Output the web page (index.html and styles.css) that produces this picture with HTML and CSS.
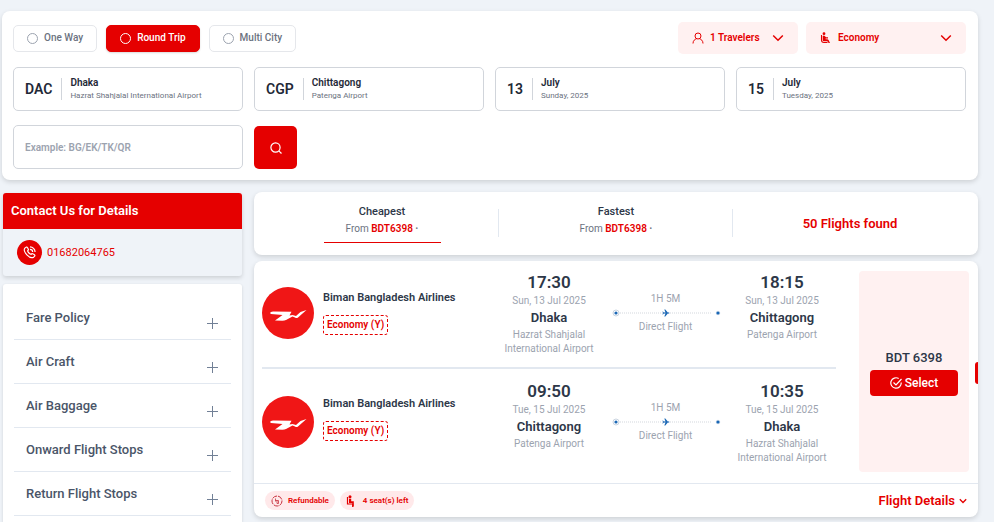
FILE: index.html
```html
<!DOCTYPE html>
<html lang="en">
<head>
<meta charset="utf-8">
<title>Flight search results</title>
<link rel="stylesheet" href="styles.css">
</head>
<body>
<svg class="defs" aria-hidden="true">
  <symbol id="logo" viewBox="0 0 52 52">
    <circle cx="26" cy="26" r="26" fill="#f01616"/>
    <path d="M8 26Q8.500 24.500 11 24.500L29.500 24.800L27.500 28.500L30.500 28L34 29L38.500 25L44.500 23L36 30.500Q34.500 31.500 33 30.500L30.500 29.500L24 33Q22.500 33.800 20.500 33.800L13 33.500L20.500 28L9 27Z" fill="#fff"/>
  </symbol>
  <symbol id="route" viewBox="0 0 110 12">
    <path d="M9 6H101" stroke="#d3d7dd" stroke-dasharray="1 1"/>
    <circle cx="5" cy="6" r="3" fill="#fff" stroke="#cbd5e1"/>
    <circle cx="5" cy="6" r="1.600" fill="#1a67b5"/>
    <circle cx="107" cy="6" r="2.300" fill="#dbe4ee"/>
    <circle cx="107" cy="6" r="1.600" fill="#1a67b5"/>
    <path d="M51.500 4L52.800 5.400H54.500L53.300 2.500H54.300L56.800 5.400H58Q59 6 58 6.600H56.800L54.300 9.500H53.300L54.500 6.600H52.800L51.500 8L52 6Z" fill="#1a67b5"/>
  </symbol>
  <symbol id="chevron" viewBox="0 0 12 12">
    <path d="M1.200 3.500L6 8.300L10.800 3.500" fill="none" stroke="currentColor"/>
  </symbol>
  <symbol id="plus" viewBox="0 0 12 12">
    <path d="M5.500 0V11M0 5.500H11" stroke="#718096"/>
  </symbol>
  <symbol id="seat" viewBox="0 0 12 12">
    <circle cx="4" cy="1.700" r="1.400" fill="currentColor"/>
    <path d="M1.500 3V8Q1.500 10.500 4 10.500H7.500" fill="none" stroke="currentColor" stroke-width="1.100"/>
    <path d="M2.700 4Q4 3 5 4.200L6 5.300H8V6.500H5.600V7.300H7Q8.300 7.300 8.700 8.300L10 11H8.700L7.300 9.300H4Q2.700 9.300 2.700 8Z" fill="currentColor"/>
  </symbol>
</svg>

<form class="card search">
  <div class="options">
    <div class="trip-types">
      <label class="trip"><input type="radio" name="trip">One Way</label>
      <label class="trip trip-active"><input type="radio" name="trip" checked>Round Trip</label>
      <label class="trip"><input type="radio" name="trip">Multi City</label>
    </div>
    <div class="pickers">
      <button type="button" class="picker">
        <svg class="icon" viewBox="0 0 12 12" fill="none" stroke="currentColor"><circle cx="6" cy="4" r="3"/><path d="M1 11.500C1 8.500 3 7.200 4.500 6.800M11 11.500C11 8.500 9 7.200 7.500 6.800"/></svg>
        1 Travelers
        <svg class="icon chev"><use href="#chevron"/></svg>
      </button>
      <div class="cabin">
        <svg class="icon"><use href="#seat"/></svg>
        <select aria-label="Cabin class"><option>Economy</option><option>Business</option></select>
        <svg class="icon chev"><use href="#chevron"/></svg>
      </div>
    </div>
  </div>
  <div class="fields">
    <button type="button" class="field"><span class="code">DAC</span><span class="place"><b>Dhaka</b><small>Hazrat Shahjalal International Airport</small></span></button>
    <button type="button" class="field"><span class="code">CGP</span><span class="place"><b>Chittagong</b><small>Patenga Airport</small></span></button>
    <button type="button" class="field"><span class="code">13</span><span class="place"><b>July</b><small>Sunday, 2025</small></span></button>
    <button type="button" class="field"><span class="code">15</span><span class="place"><b>July</b><small>Tuesday, 2025</small></span></button>
    <input class="airline-code" type="text" aria-label="Airline codes" placeholder="Example: BG/EK/TK/QR">
    <button type="submit" class="go" aria-label="Search"><svg class="icon" viewBox="0 0 12 12" fill="none" stroke="currentColor" stroke-width="1.200"><circle cx="5.500" cy="5.500" r="4.600"/><path d="M8.800 8.800L11.500 11.500"/></svg></button>
  </div>
</form>

<div class="columns">
  <aside class="sidebar">
    <section class="contact">
      <h2>Contact Us for Details</h2>
      <a href="tel:01682064765">
        <span class="phone"><svg viewBox="0 0 14 14" fill="none" stroke="currentColor" stroke-width="1.300"><path d="M3.500 1.200L2 2.300C.5 4 2.200 7.500 4.200 9.600S9.500 13.300 11.500 12L12.700 10.700C13 10 12.700 9.600 12 9.200L10.300 8.300C9.700 8 9.200 8.300 8.700 9C7.500 9 5 6.500 5 5.200C5.700 4.700 6 4.200 5.700 3.600L4.800 1.700C4.500 1 4 1 3.500 1.200Z"/><path d="M7.500 1C10.500 1 13 3.500 13 6.500M7.500 3.600C9.200 3.600 10.400 4.800 10.400 6.500"/></svg></span>
        01682064765
      </a>
    </section>
    <section class="filters">
      <button type="button">Fare Policy<svg class="icon"><use href="#plus"/></svg></button>
      <button type="button">Air Craft<svg class="icon"><use href="#plus"/></svg></button>
      <button type="button">Air Baggage<svg class="icon"><use href="#plus"/></svg></button>
      <button type="button">Onward Flight Stops<svg class="icon"><use href="#plus"/></svg></button>
      <button type="button">Return Flight Stops<svg class="icon"><use href="#plus"/></svg></button>
    </section>
  </aside>

  <main class="results">
    <div class="card summary">
      <button type="button" class="sort sort-active"><span class="sort-name">Cheapest</span><span>From <b>BDT6398</b> <strong>·</strong></span></button>
      <button type="button" class="sort"><span class="sort-name">Fastest</span><span>From <b>BDT6398</b> <strong>·</strong></span></button>
      <p class="found">50 Flights found</p>
    </div>

    <article class="card flight">
      <div class="flight-body">
        <div class="legs">
          <section class="leg">
            <div class="airline">
              <svg class="logo"><use href="#logo"/></svg>
              <div><p class="airline-name">Biman Bangladesh Airlines</p><span class="class-tag">Economy (Y)</span></div>
            </div>
            <div class="stop"><p class="time">17:30</p><p>Sun, 13 Jul 2025</p><p class="city">Dhaka</p><p class="airport">Hazrat Shahjalal International Airport</p></div>
            <div class="route"><p>1H 5M</p><svg><use href="#route"/></svg><p>Direct Flight</p></div>
            <div class="stop"><p class="time">18:15</p><p>Sun, 13 Jul 2025</p><p class="city">Chittagong</p><p class="airport">Patenga Airport</p></div>
          </section>
          <section class="leg">
            <div class="airline">
              <svg class="logo"><use href="#logo"/></svg>
              <div><p class="airline-name">Biman Bangladesh Airlines</p><span class="class-tag">Economy (Y)</span></div>
            </div>
            <div class="stop"><p class="time">09:50</p><p>Tue, 15 Jul 2025</p><p class="city">Chittagong</p><p class="airport">Patenga Airport</p></div>
            <div class="route"><p>1H 5M</p><svg><use href="#route"/></svg><p>Direct Flight</p></div>
            <div class="stop"><p class="time">10:35</p><p>Tue, 15 Jul 2025</p><p class="city">Dhaka</p><p class="airport">Hazrat Shahjalal International Airport</p></div>
          </section>
        </div>
        <div class="price">
          <p>BDT 6398</p>
          <button type="button"><svg class="icon" viewBox="0 0 12 12" fill="none" stroke="currentColor" stroke-width="1.200"><path d="M11.200 5.500A5.200 5.200 0 1 1 8.700 1.500"/><path d="M3.500 5.500L6 8L11.500 2"/></svg>Select</button>
        </div>
      </div>
      <footer class="flight-foot">
        <span class="pill"><svg class="icon" viewBox="0 0 12 12" fill="none" stroke="#c8323f"><circle cx="6" cy="6" r="5" stroke-dasharray="5 1"/><path d="M4.500 3.500V6.500M6 5.500V8.500H7.500V5.500H4.500" stroke-width=".8"/></svg>Refundable</span>
        <span class="pill"><svg class="icon" viewBox="0 0 12 12"><circle cx="4" cy="1.800" r="1.500" fill="currentColor"/><path d="M1.500 2V9H6.700V12" fill="none" stroke="currentColor" stroke-width="1.200"/><path d="M3 3.700H5.200V6.300H7.800V11.500H6.300V8H3Z" fill="currentColor"/></svg>4 seat(s) left</span>
        <button type="button" class="details">Flight Details<svg><use href="#chevron"/></svg></button>
      </footer>
      <span class="side-tab"></span>
    </article>
  </main>
</div>
</body>
</html>
```

FILE: styles.css
```css
* { box-sizing: border-box; margin: 0; }
body {
  display: flex;
  flex-direction: column;
  min-height: 100vh;
  padding: 11px 16px 0 2px;
  background: #eff3f8;
  color: #2d3748;
  font: 10px/14px Roboto, sans-serif;
}
button, input, select { font: inherit; color: inherit; border: 0; background: none; padding: 0; }
b { font-weight: 600; }
.defs { position: absolute; width: 0; height: 0; }
.icon { width: 12px; height: 12px; flex: none; }
.card { background: #fff; border-radius: 8px; box-shadow: 0 2px 5px rgba(0, 0, 0, .14); }

/* Search form */
.search { padding: 11px 12px 11px 11px; }
.options { display: flex; justify-content: space-between; align-items: center; height: 32px; }
.trip-types { display: flex; gap: 9px; }
.pickers { display: flex; gap: 8px; }
.trip {
  display: flex; align-items: center; gap: 6px;
  height: 27px; padding: 0 13px;
  border: 1px solid #e5e7eb; border-radius: 5px;
  color: #6b7280; font-weight: 500;
}
.trip input { appearance: none; width: 11px; height: 11px; margin: 0; border: 1px solid #9ca3af; border-radius: 50%; }
.trip-active { background: #e50000; border-color: #e50000; color: #fff; box-shadow: 0 1px 2px rgba(0, 0, 0, .15); }
.trip-active input { border-color: #fff; }
.picker, .cabin {
  display: flex; align-items: center; gap: 6px;
  height: 32px; padding: 0 14px;
  border-radius: 5px; background: #fff1f1;
  color: #e50000; font-weight: 600;
}
.picker { width: 120px; }
.cabin { width: 160px; }
.cabin select { appearance: none; flex: 1; }
.chev { margin-left: auto; stroke-width: 1.500; }
.fields { display: grid; grid-template-columns: repeat(4, 1fr); gap: 14px 11px; margin-top: 13px; }
.field, .airline-code { height: 44px; border: 1px solid #d1d5db; border-radius: 5px; padding: 0 11px; }
.field { display: flex; align-items: center; text-align: left; }
.code { font-size: 14px; font-weight: 600; color: #1f2937; padding-right: 9px; }
.place { display: grid; align-content: center; height: 22px; padding-left: 8px; border-left: 1px solid #d1d5db; line-height: 13px; }
.place b { color: #1f2937; }
.place small { font-size: 8px; color: #6b7280; }
.airline-code { font-weight: 600; }
.airline-code::placeholder { color: #9ca3af; }
.go { display: grid; place-items: center; align-self: end; width: 43px; height: 43px; border-radius: 5px; background: #e50000; color: #fff; }

/* Page columns */
.columns { flex: 1; display: grid; grid-template-columns: 239px 1fr; gap: 12px; margin-top: 12px; padding-left: 1px; }
.sidebar { display: flex; flex-direction: column; padding-top: 1px; }
.contact { border-radius: 3px; overflow: hidden; box-shadow: 0 2px 4px rgba(0, 0, 0, .14); }
.contact h2 { padding: 0 8px; background: #e50000; color: #fff; font-size: 13px; line-height: 36px; font-weight: 600; }
.contact a { display: flex; align-items: center; gap: 5px; height: 47px; padding: 0 14px; color: #e50000; font-size: 11px; text-decoration: none; }
.phone { display: grid; place-items: center; width: 25px; height: 25px; border-radius: 50%; background: #e50000; color: #fff; }
.phone svg { width: 13px; height: 13px; }
.filters { flex: 1; margin-top: 8px; padding: 12px 11px 0; border-radius: 3px 3px 0 0; background: #fff; box-shadow: 0 1px 3px rgba(0, 0, 0, .14); }
.filters button {
  display: flex; justify-content: space-between; align-items: end;
  width: 100%; height: 44px; padding: 0 12px 13px;
  border-bottom: 1px solid #e2e8f0;
  color: #4a5568; font-size: 13px; line-height: 16px; font-weight: 500;
}
.filters .icon { margin-bottom: -4px; }

/* Results summary */
.summary { display: grid; grid-template-columns: repeat(3, 1fr); height: 63px; padding: 0 11px; background: #fff; }
.sort { position: relative; display: flex; flex-direction: column; align-items: center; gap: 3px; padding-top: 13px; color: #6b7280; }
.sort::before { content: ""; position: absolute; right: 0; top: 17px; height: 28px; border-right: 1px solid #e2e8f0; }
.sort-active::after { content: ""; position: absolute; left: 25%; width: 50%; top: 50px; border-top: 1px solid #e50000; }
.sort-name { font-size: 11px; font-weight: 500; color: #2d3748; }
.sort b, .found { color: #e50000; font-weight: 600; }
.found { align-self: center; text-align: center; font-size: 13px; }

/* Flight card */
.flight { position: relative; margin-top: 6px; }
.flight-body { display: flex; gap: 23px; padding: 10px 9px 11px 8px; }
.legs { flex: 1; }
.leg { display: grid; grid-template-columns: 1fr 108px 125px 108px; height: 98px; color: #9ca3af; text-align: center; }
.leg:first-child { border-bottom: 2px solid #e2e8f0; }
.leg + .leg { padding-top: 11px; height: 103px; }
.airline { display: flex; gap: 9px; text-align: left; padding-top: 16px; height: 70px; }
.logo { width: 52px; height: 52px; }
.airline-name { font-size: 11px; font-weight: 600; color: #2d3748; margin: 4px 0 10px; }
.leg + .leg .airline-name { margin-top: 1px; }
.class-tag { display: inline-block; padding: 2px 3px; border: 1px dashed #e50000; border-radius: 3px; color: #e50000; font-weight: 600; }
.time { font-size: 17px; line-height: 23px; font-weight: 600; color: #2d3748; }
.city { font-size: 13px; line-height: 20px; font-weight: 600; color: #2d3748; }
.route { padding-top: 21px; }
.route svg { display: block; width: 110px; height: 12px; margin: 1px auto; }
.price { display: flex; flex-direction: column; align-items: center; justify-content: center; gap: 5px; width: 110px; height: 201px; padding-top: 4px; border-radius: 4px; background: #fff1f1; }
.price p { font-size: 13px; font-weight: 500; }
.price button { display: flex; align-items: center; justify-content: center; gap: 3px; width: 88px; height: 26px; border-radius: 4px; background: #e50000; color: #fff; font-size: 12px; font-weight: 500; }
.flight-foot { display: flex; align-items: center; gap: 5px; height: 34px; padding: 0 11px; border-top: 1px solid #e2e8f0; }
.pill { display: flex; align-items: center; gap: 5px; height: 19px; padding: 0 6px; border-radius: 10px; background: #ffe9ea; color: #e50000; font-size: 8px; font-weight: 600; }
.details { display: flex; align-items: center; gap: 4px; margin-left: auto; color: #e50000; font-size: 13px; font-weight: 600; }
.details svg { width: 8px; height: 8px; stroke-width: 2; }
.side-tab { position: absolute; right: 0; top: 101px; width: 3px; height: 22px; border-radius: 3px 0 0 3px; background: #e50000; }
```
